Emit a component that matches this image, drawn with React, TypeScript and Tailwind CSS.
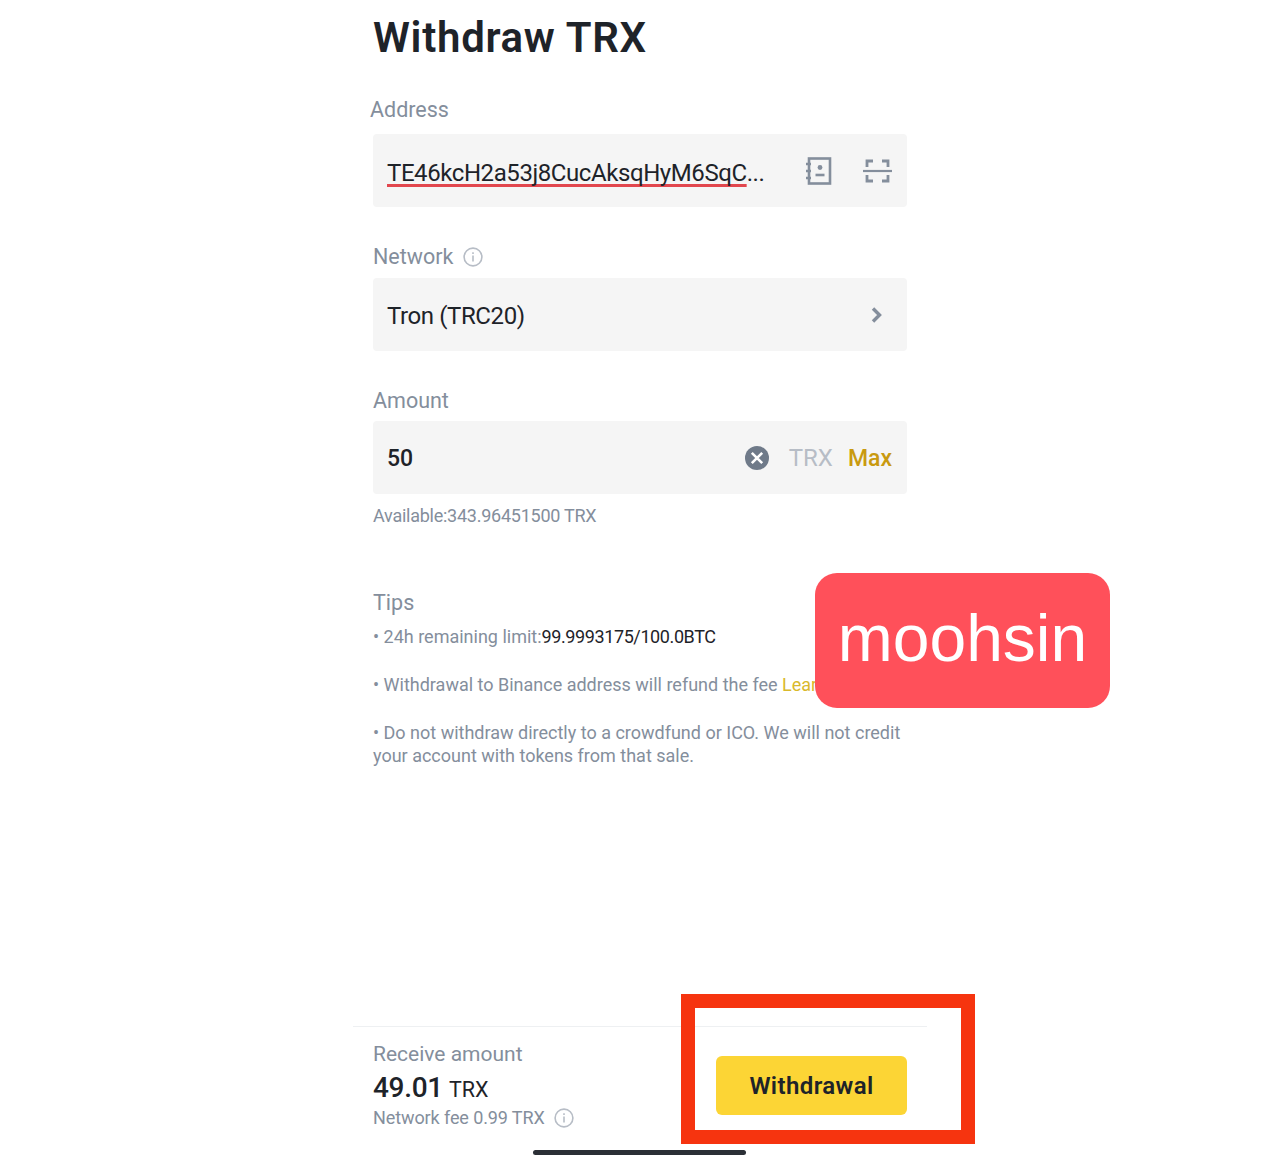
const InfoIcon = ({ className }: { className: string }) => {
  return (
    <svg className={className} viewBox="0 0 20 20" fill="none" stroke="#b7bdc6" strokeWidth="1.6">
      <circle cx="10" cy="10" r="8.9" />
      <path d="M10 8.6v6" />
      <path d="M10 5.2v1.7" />
    </svg>
  );
};

const Label = ({ children }: { children: React.ReactNode }) => {
  return <p className="text-[21.5px] leading-[28px] text-[#848e9c]">{children}</p>;
};

const App = () => {
  return (
    <div className="relative h-[1165px] overflow-hidden bg-white font-['Roboto',sans-serif]">
      <div className="mx-auto flex h-full w-[574px] flex-col">
        <div className="flex flex-col px-5">
          <h1 className="mt-[13px] h-[50px] text-[42px] leading-[50px] font-semibold tracking-[0.7px] text-[#1e2329]">
            Withdraw TRX
          </h1>

          <div className="mt-[33px] -ml-[3px]">
            <Label>Address</Label>
          </div>
          <div className="mt-[10px] flex h-[73px] items-center justify-between rounded-[4px] bg-[#f5f5f5] pr-[15px] pl-[14px]">
            <p className="pt-[4px] text-[24px] tracking-[-0.42px] text-[#1e2329]">
              <span className="underline decoration-[#e2474e] decoration-[3px] underline-offset-[3px] [text-decoration-skip-ink:none]">
                TE46kcH2a53j8CucAksqHyM6SqC
              </span>
              ...
            </p>
            <div className="flex items-center gap-[30px]">
              <svg className="h-[28px] w-[28px]" viewBox="0 0 28 28" fill="none" stroke="#848e9c" strokeWidth="2.6">
                <rect x="4" y="1.5" width="21" height="25" />
                <path d="M1 7h5M1 14h5M1 21h5" />
                <circle cx="15" cy="10.5" r="2.4" fill="#848e9c" stroke="none" />
                <path d="M10.5 18h9" />
              </svg>
              <svg className="h-[28px] w-[29px]" viewBox="0 0 29 28" fill="none" stroke="#848e9c" strokeWidth="2.8">
                <path d="M4 10V4h6M19 4h6v6M4 18v6h6M25 18v6h-6" />
                <path d="M0 14h29" strokeWidth="2.2" />
              </svg>
            </div>
          </div>

          <div className="mt-[36px] flex items-center gap-[10px]">
            <Label>Network</Label>
            <InfoIcon className="h-[20px] w-[20px]" />
          </div>
          <div className="mt-[7px] flex h-[73px] items-center justify-between rounded-[4px] bg-[#f5f5f5] pr-[24px] pl-[14px]">
            <p className="pt-[2px] text-[24px] tracking-[-0.4px] text-[#1e2329]">Tron (TRC20)</p>
            <svg className="h-[16px] w-[12px]" viewBox="0 0 12 16" fill="none" stroke="#848e9c" strokeWidth="3.4">
              <path d="M2 1.5 8.5 8 2 14.5" />
            </svg>
          </div>

          <div className="mt-[36px]">
            <Label>Amount</Label>
          </div>
          <div className="mt-[6px] flex h-[73px] items-center justify-between rounded-[4px] bg-[#f5f5f5] pr-[15px] pl-[14px]">
            <p className="pt-[4px] text-[23px] font-medium text-[#1e2329]">50</p>
            <div className="flex items-center">
              <svg className="h-[24px] w-[24px]" viewBox="0 0 24 24">
                <circle cx="12" cy="12" r="12" fill="#6f7a89" />
                <path d="M6.8 6.8l10.4 10.4M17.2 6.8 6.8 17.2" stroke="#fff" strokeWidth="2.6" fill="none" />
              </svg>
              <span className="ml-[20px] text-[24px] text-[#b7bdc6]">TRX</span>
              <span className="ml-[15px] pt-[4px] text-[23px] font-medium text-[#c99a10]">Max</span>
            </div>
          </div>
          <p className="mt-[10px] text-[18px] leading-[24px] tracking-[-0.25px] text-[#848e9c]">Available:343.96451500 TRX</p>

          <p className="mt-[61px] text-[21.5px] leading-[28px] text-[#848e9c]">Tips</p>
          <p className="mt-[8px] text-[18px] leading-[24px] text-[#848e9c]">
            • 24h remaining limit:<span className="tracking-[-0.4px] text-[#1e2329]">99.9993175/100.0BTC</span>
          </p>
          <p className="mt-[24px] text-[18px] leading-[24px] whitespace-nowrap text-[#848e9c]">
            • Withdrawal to Binance address will refund the fee <span className="text-[#d9b92c]">Learn more</span>
          </p>
          <p className="mt-[24px] text-[18px] leading-[23px] text-[#848e9c]">
            • Do not withdraw directly to a crowdfund or ICO. We will not credit your account with tokens from that sale.
          </p>
        </div>

        <div className="mt-auto mb-[50px] flex h-[89px] justify-between border-t border-[#eef0f2] px-5">
          <div className="flex flex-col">
            <p className="mt-[13px] text-[21px] leading-[28px] text-[#848e9c]">Receive amount</p>
            <p className="mt-[3px] flex items-baseline gap-[6px] leading-[34px] text-[#1e2329]">
              <span className="text-[28px] font-medium tracking-[-0.3px]">49.01</span>
              <span className="text-[21.5px]">TRX</span>
            </p>
            <div className="-mt-px flex items-center gap-[9px]">
              <p className="text-[18px] leading-[24px] tracking-[-0.1px] text-[#848e9c]">Network fee 0.99 TRX</p>
              <InfoIcon className="h-[20px] w-[20px]" />
            </div>
          </div>
          <button className="mt-[29px] h-[59px] w-[191px] rounded-[6px] bg-[#fcd535] text-[24px] font-semibold tracking-[0.4px] text-[#1e2329]">
            Withdrawal
          </button>
        </div>
      </div>

      <div className="absolute top-[1150px] left-[533px] h-[5px] w-[213px] rounded-full bg-[#2b2f36]" />

      <div className="absolute top-[573px] left-[815px] flex h-[135px] w-[295px] items-center justify-center rounded-[22px] bg-[#ff505a] pb-[4px] font-['Liberation_Sans',sans-serif] text-[66px] text-white">
        moohsin
      </div>

      <div className="absolute top-[994px] left-[681px] h-[150px] w-[294px] border-[14px] border-[#f6340f]" />
    </div>
  );
};

export default App;
